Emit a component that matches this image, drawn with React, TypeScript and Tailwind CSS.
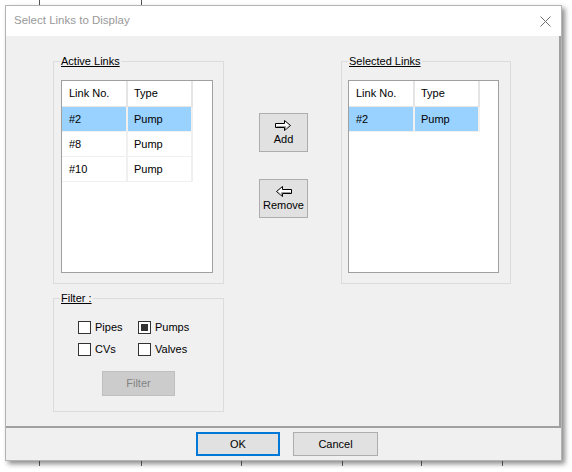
import { ReactNode } from "react";

type Row = { no: string; type: string; selected?: boolean };

const activeRows: Row[] = [
  { no: "#2", type: "Pump", selected: true },
  { no: "#8", type: "Pump" },
  { no: "#10", type: "Pump" },
];

const selectedRows: Row[] = [{ no: "#2", type: "Pump", selected: true }];

const GroupLabel = ({ children }: { children: ReactNode }) => (
  <div className="-mt-[7px] ml-[6px] w-fit bg-[#f0f0f0] px-[1px] leading-[13px] underline underline-offset-[1px]">
    {children}
  </div>
);

const ListBox = ({ rows, className }: { rows: Row[]; className: string }) => (
  <div className={`border border-[#a0a0a0] bg-white ${className}`}>
    <div className="flex h-[26px] w-fit border-b border-[#e5e5e5]">
      <div className="flex w-[66px] items-center border-r-2 border-[#e5e5e5] pl-[7px]">
        Link No.
      </div>
      <div className="flex w-[65px] items-center border-r-2 border-[#e5e5e5] pl-[6px]">
        Type
      </div>
    </div>
    {rows.map((r) => (
      <div
        key={r.no}
        className={`flex h-[25px] w-fit border-b border-[#f0f0f0] ${r.selected ? "bg-[#99d1ff]" : ""}`}
      >
        <div className="flex w-[66px] items-center border-r-2 border-[#f0f0f0] pl-[7px]">
          {r.no}
        </div>
        <div className="flex w-[65px] items-center border-r-2 border-[#f0f0f0] pl-[6px]">
          {r.type}
        </div>
      </div>
    ))}
  </div>
);

const Check = ({ label, checked }: { label: string; checked?: boolean }) => (
  <div className="flex w-[60px] items-center gap-[4px]">
    <div className="flex size-[13px] items-center justify-center border border-[#333333] bg-white">
      {checked && <div className="size-[7px] bg-[#333333]" />}
    </div>
    <span className="leading-[13px]">{label}</span>
  </div>
);

const Arrow = ({ left }: { left?: boolean }) => (
  <svg width="17" height="11" viewBox="0 0 17 11" className={left ? "-scale-x-100" : ""}>
    <path
      d="M0.5 3.5 H9.5 V0.5 L15.5 5.5 L9.5 10.5 V7.5 H0.5 Z"
      fill="#ffffff"
      stroke="#000000"
      strokeWidth="1"
    />
    <path d="M1.5 6.5 H10.5 V9 L14.5 5.5" fill="none" stroke="#9a9a9a" strokeWidth="1" />
  </svg>
);

const ticksBottom = ["left-[39px]", "left-[141px]", "left-[241px]", "left-[342px]", "left-[421px]", "left-[502px]"];

export default function App() {
  return (
    <div className="relative h-[472px] w-[572px] overflow-hidden bg-white pl-[5px] pt-[5px] font-['Liberation_Sans',Arial,sans-serif] text-[11px] text-black">
      <div className="absolute left-[39px] top-0 h-[5px] w-px bg-[#555555]" />
      <div className="absolute left-[141px] top-0 h-[5px] w-px bg-[#555555]" />
      {ticksBottom.map((t) => (
        <div key={t} className={`absolute top-[461px] h-[5px] w-px bg-[#666666] ${t}`} />
      ))}

      <div className="relative flex h-[456px] w-[557px] flex-col border border-[#b4b4b4] bg-white shadow-[3px_3px_5px_rgba(0,0,0,0.45)]">
        {/* title bar */}
        <div className="flex h-[30px] shrink-0 items-center justify-between pl-[8px] pr-[10px]">
          <span className="text-[11.5px] text-[#999999]">Select Links to Display</span>
          <svg width="11" height="11" viewBox="0 0 11 11">
            <path d="M0.5 0.5 L10.5 10.5 M10.5 0.5 L0.5 10.5" stroke="#707070" strokeWidth="1" />
          </svg>
        </div>

        {/* body */}
        <div className="flex h-[392px] shrink-0 border-b-2 border-r-2 border-[#a0a0a0] bg-[#f0f0f0] pl-[47px] pt-[25px]">
          <div className="flex w-[171px] flex-col">
            <div className="h-[223px] border border-[#dcdcdc]">
              <GroupLabel>Active Links</GroupLabel>
              <ListBox rows={activeRows} className="ml-[7px] mt-[12px] h-[193px] w-[152px]" />
            </div>
            <div className="mt-[14px] h-[114px] border border-[#dcdcdc]">
              <GroupLabel>Filter :</GroupLabel>
              <div className="ml-[24px] mt-[16px] flex flex-col gap-[9px]">
                <div className="flex">
                  <Check label="Pipes" />
                  <Check label="Pumps" checked />
                </div>
                <div className="flex">
                  <Check label="CVs" />
                  <Check label="Valves" />
                </div>
              </div>
              <div className="ml-[48px] mt-[15px] flex h-[25px] w-[73px] items-center justify-center border border-[#bfbfbf] bg-[#cccccc] text-[#838383]">
                Filter
              </div>
            </div>
          </div>

          <div className="ml-[35px] flex flex-col">
            <div className="mt-[52px] flex h-[39px] w-[49px] flex-col items-center justify-center border border-[#adadad] bg-[#e1e1e1] leading-[13px]">
              <Arrow />
              <span className="mt-[2px]">Add</span>
            </div>
            <div className="mt-[27px] flex h-[39px] w-[49px] flex-col items-center justify-center border border-[#adadad] bg-[#e1e1e1] leading-[13px]">
              <Arrow left />
              <span className="mt-[2px]">Remove</span>
            </div>
          </div>

          <div className="ml-[33px] h-[223px] w-[170px] border border-[#dcdcdc]">
            <GroupLabel>Selected Links</GroupLabel>
            <ListBox rows={selectedRows} className="ml-[6px] mt-[12px] h-[193px] w-[151px]" />
          </div>
        </div>

        {/* button strip */}
        <div className="flex h-[32px] gap-[13px] bg-[#f0f0f0] pl-[190px] pt-[4px]">
          <div className="flex h-[24px] w-[84px] items-center justify-center border-2 border-[#0078d7] bg-[#e1e1e1]">
            OK
          </div>
          <div className="flex h-[24px] w-[85px] items-center justify-center border border-[#adadad] bg-[#e1e1e1]">
            Cancel
          </div>
        </div>
      </div>
    </div>
  );
}
